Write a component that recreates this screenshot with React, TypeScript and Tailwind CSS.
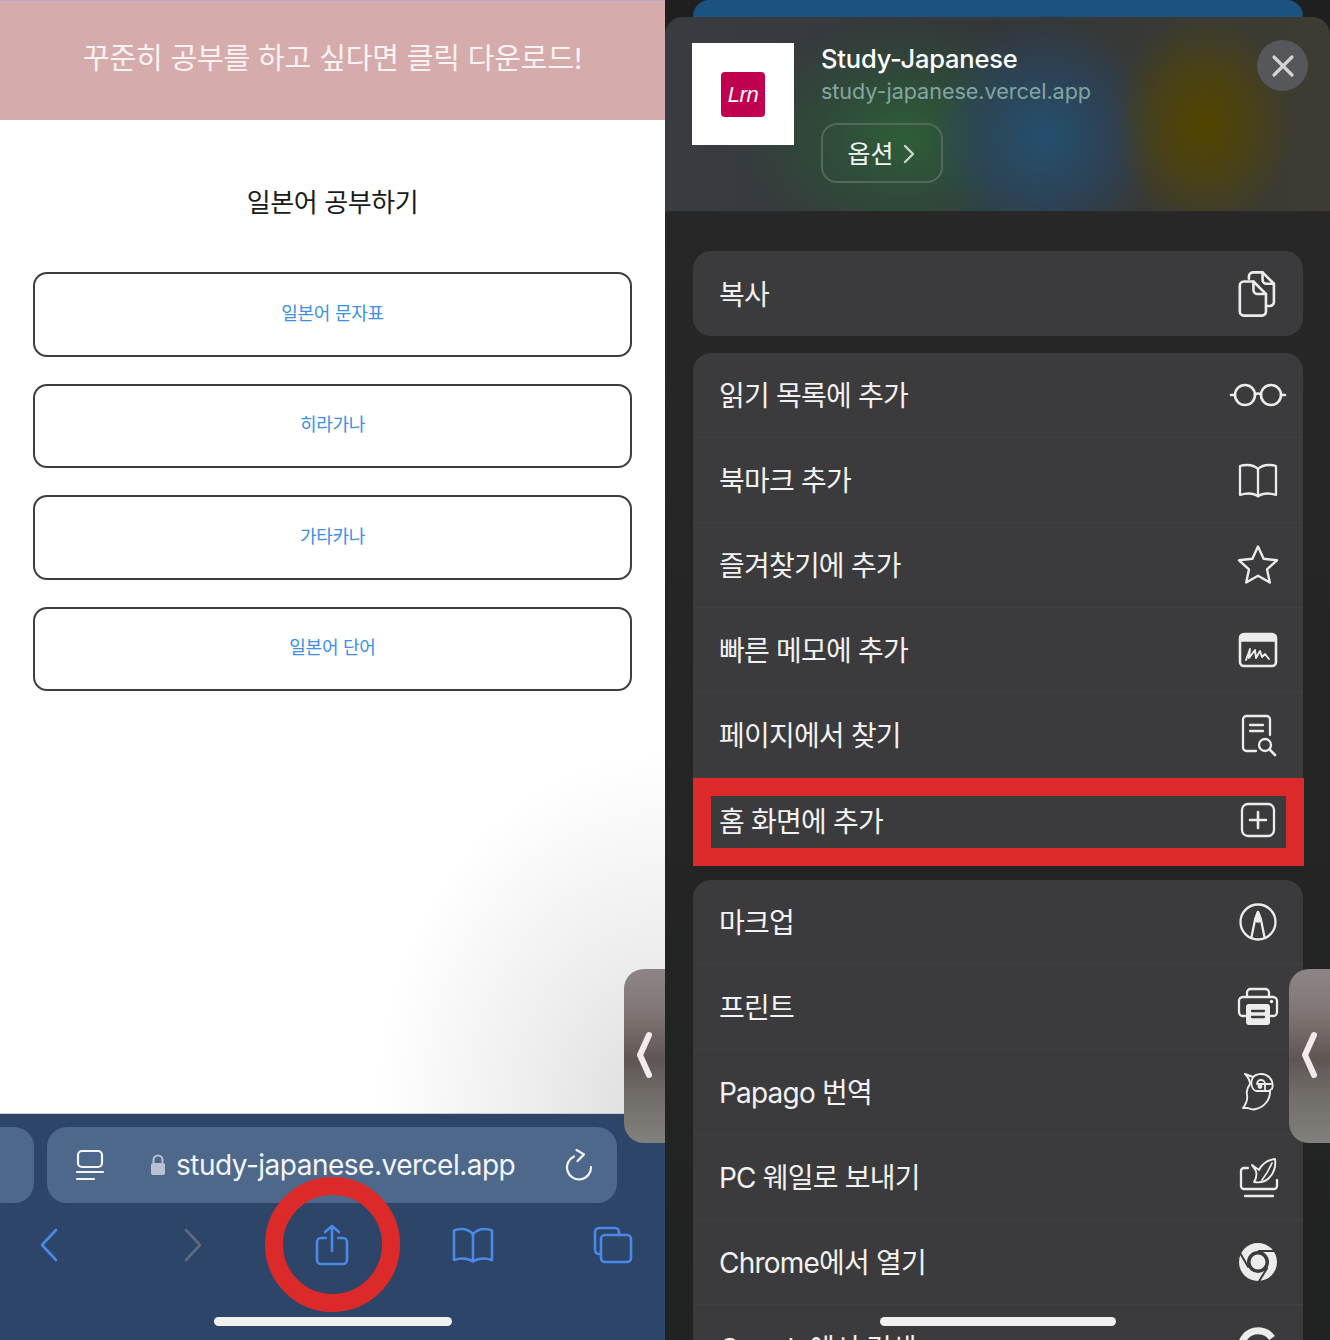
import React from "react";

const FONT = { fontFamily: '"Inter","Noto Sans CJK KR",sans-serif' };

type IconProps = { children: React.ReactNode; className?: string; box?: string };
const Ico = ({ children, className = "w-[44px] h-[44px] shrink-0", box = "0 0 44 44" }: IconProps) => (
  <svg viewBox={box} className={className} fill="none" stroke="currentColor" strokeWidth={2.300} strokeLinecap="round" strokeLinejoin="round">
    {children}
  </svg>
);

const Copy = () => (
  <Ico className="w-[50px] h-[50px] shrink-0">
    <path d="M14 8.500V6.500A3.500 3.500 0 0 1 17.500 3h8.500l10 10v16a3.500 3.500 0 0 1-3.500 3.500H29" />
    <path d="M26 3v6.500a3.500 3.500 0 0 0 3.500 3.500H36" />
    <path d="M6 14.500A3.500 3.500 0 0 1 9.500 11h8.500l11 11v15.500A3.500 3.500 0 0 1 25.500 41h-16A3.500 3.500 0 0 1 6 37.500Z" fill="#3b3b3d" />
    <path d="M18 11v7.500a3.500 3.500 0 0 0 3.500 3.500H29" />
  </Ico>
);
const Glasses = () => (
  <svg viewBox="0 0 60 28" className="w-[60px] h-[28px] shrink-0" fill="none" stroke="currentColor" strokeWidth={2.600} strokeLinecap="round">
    <circle cx="17" cy="14" r="10" />
    <circle cx="43" cy="14" r="10" />
    <path d="M27 13.500q3-2 6 0M7 14H3M53 14h4" />
  </svg>
);
const Book = () => (
  <Ico>
    <path d="M22 11c-3-3-7-4-11-4-2.500 0-5 .300-7 1v29c3-1 6-1.500 8.500-1.500 3.500 0 7 .800 9.500 3 2.500-2.200 6-3 9.500-3 2.500 0 5.500.500 8.500 1.500V8c-2-.700-4.500-1-7-1-4 0-8 1-11 4Z" />
    <path d="M22 11v27" />
  </Ico>
);
const Star = () => (
  <Ico>
    <path d="M22 3.500l5.600 12.300 13.400 1.500-10 9 2.800 13.200L22 32.800 10.200 39.500 13 26.300l-10-9 13.400-1.500Z" strokeWidth={2.400} />
  </Ico>
);
const Memo = () => (
  <Ico>
    <rect x="4" y="6" width="36" height="32" rx="4" strokeWidth={2.600} />
    <path d="M5 7.500h34v5.500H5Z" fill="currentColor" strokeWidth={1.500} />
    <path d="M10 32l4-11-1 9 6-8 1 8 4-7 2 6 3-3 4 5" strokeWidth={1.900} />
  </Ico>
);
const FindPage = () => (
  <Ico>
    <path d="M20 38H10.500A3.500 3.500 0 0 1 7 34.500V6.500A3.500 3.500 0 0 1 10.500 3h20A3.500 3.500 0 0 1 34 6.500V22" />
    <path d="M14 12h13M14 18h13" />
    <circle cx="29" cy="32" r="6" />
    <path d="M33.500 36.500L39 42" strokeWidth={2.600} />
  </Ico>
);
const PlusBox = () => (
  <Ico>
    <rect x="6" y="5" width="32" height="32" rx="6" />
    <path d="M22 13v16M14 21h16" strokeWidth={2.600} />
  </Ico>
);
const Markup = () => (
  <Ico>
    <circle cx="22" cy="22" r="17.500" />
    <path d="M15.500 37l3.500-17 3-8 3 8 3.500 17" />
    <path d="M19 20c1.500 2 4.500 2 6 0l-3-8Z" fill="currentColor" />
  </Ico>
);
const Printer = () => (
  <Ico>
    <path d="M11 12V7.500A3.500 3.500 0 0 1 14.500 4h15A3.500 3.500 0 0 1 33 7.500V12" />
    <path d="M9 31H7a4 4 0 0 1-4-4V16a4 4 0 0 1 4-4h30a4 4 0 0 1 4 4v11a4 4 0 0 1-4 4h-2" />
    <rect x="10" y="19" width="24" height="21" rx="3" fill="#ececec" stroke="none" />
    <path d="M16 26h12M16 32h12" stroke="#3b3b3d" />
    <circle cx="35.500" cy="16.500" r="1.700" fill="currentColor" stroke="none" />
  </Ico>
);
const Owl = () => (
  <Ico>
    <path d="M9 4l8 3c3-3 9-4 13-2 5 2 8 8 6 14l-2 1v2c0 8-6 15-14 17-3 1-6 0-8-1H7c3-4 5-8 4-13-1-4 1-8 3-11 0-4-2-7-5-10Z" strokeWidth={1.900} />
    <path d="M17 7c-3 5-2 12 3 14h13M21 14a4 4 0 0 1 8 0v7M21 14h14" strokeWidth={1.800} />
    <circle cx="24" cy="16.500" r="1.300" fill="currentColor" />
  </Ico>
);
const Whale = () => (
  <Ico>
    <path d="M12 13H8a3 3 0 0 0-3 3v15a3 3 0 0 0 3 3h30a3 3 0 0 0 3-3v-6" />
    <path d="M9 41h28" />
    <path d="M16 10c2 2 5 3 7 5 3-6 9-10 16-11 1 7-1 14-6 19-3 3-9 5-15 4 2-3 3-7 2-11-1-2-3-4-4-6Z" strokeWidth={1.900} />
    <path d="M26 25c4-5 7-10 10-17" strokeWidth={1.700} />
  </Ico>
);
const Chrome = () => (
  <svg viewBox="0 0 44 44" className="w-[44px] h-[44px] shrink-0">
    <circle cx="22" cy="22" r="19" fill="#ececec" />
    <circle cx="22" cy="22" r="11" fill="#3b3b3d" />
    <circle cx="22" cy="22" r="7.500" fill="#ececec" />
    <path d="M22 11h18.500M12.500 27.500L3.500 12M31.500 27.500L22 43" stroke="#3b3b3d" strokeWidth={2} />
  </svg>
);

type RowT = { t: string; i: React.ReactNode };
const Row = ({ t, i, last }: RowT & { last?: boolean }) => (
  <div className={`h-[85px] shrink-0 flex items-center justify-between pl-[26px] pr-[23px] ${last ? "" : "border-b border-[#404043]"}`}>
    <span className="pt-[2px] text-[28px] text-[#f2f2f2] tracking-[-0.8px] whitespace-nowrap">{t}</span>
    <span className="w-[44px] h-[44px] flex items-center justify-center text-[#ececec]">{i}</span>
  </div>
);

const Study = ({ label }: { label: string }) => (
  <div className="h-[84.500px] pb-[2px] rounded-[14px] border-2 border-[#3d3d3d] flex items-center justify-center text-[18px] text-[#3b8fe6] -tracking-[0.25px]">
    {label}
  </div>
);

const Handle = () => (
  <div className="absolute right-0 top-[969px] w-[41px] h-[174px] rounded-l-[20px] bg-[linear-gradient(180deg,#8d8585_0%,#7f7675_25%,#5f5654_52%,#716d69_72%,#82807c_100%)] flex items-center pl-[12px]">
    <svg viewBox="0 0 18 48" className="w-[18px] h-[48px] -mt-[2px]" fill="none" stroke="#f4e9ee" strokeWidth={6} strokeLinecap="round" strokeLinejoin="round">
      <path d="M13 4L4 24l9 20" />
    </svg>
  </div>
);

const BLUE = "#4a8ae6";

export default function App() {
  return (
    <div style={FONT} className="w-[1330px] h-[1340px] grid grid-cols-2 overflow-hidden bg-black">
      {/* Left: Safari */}
      <div className="relative h-[1340px] overflow-hidden flex flex-col bg-white">
        <div className="h-[120px] shrink-0 bg-[#d6abab] border-t border-[#b9a9c4] flex items-center justify-center text-[29px] font-normal text-[#fbf3f3] pb-[3px] -tracking-[0.15px]">
          꾸준히 공부를 하고 싶다면 클릭 다운로드!
        </div>
        <div className="flex-1 flex flex-col bg-[radial-gradient(ellipse_290px_360px_at_100%_100%,#dcdcdc_0%,#ededed_45%,#ffffff_100%)]">
          <div className="text-center text-[26px] text-[#1a1a1a] mt-[64px] leading-[38px] -tracking-[0.4px]">일본어 공부하기</div>
          <div className="mt-[50px] mx-[33px] flex flex-col gap-[27px]">
            <Study label="일본어 문자표" />
            <Study label="히라가나" />
            <Study label="가타카나" />
            <Study label="일본어 단어" />
          </div>
        </div>
        <div className="h-[227px] shrink-0 bg-[#2d4568] border-t border-[#c9ccd1] flex flex-col">
          <div className="mt-[13px] flex gap-[13px] h-[76px]">
            <div className="w-[34px] shrink-0 rounded-r-[20px] bg-[#4e688c]" />
            <div className="w-[570px] rounded-[20px] bg-[#4e688c] flex items-center pl-[28px] pr-[22px] text-[#f3f5f8]">
              <svg viewBox="0 0 30 32" className="w-[30px] h-[32px] shrink-0" fill="none" stroke="currentColor" strokeWidth={2.200} strokeLinecap="round">
                <rect x="3" y="2" width="24" height="16" rx="4" />
                <path d="M2 23h26M2 30h17" />
              </svg>
              <svg viewBox="0 0 16 24" className="w-[16px] h-[24px] shrink-0 ml-[45px]">
                <path d="M3.500 10V7a4.500 4.500 0 0 1 9 0v3" fill="none" stroke="#b7c1d2" strokeWidth={2} />
                <rect x="1" y="10" width="14" height="12" rx="2" fill="#b7c1d2" />
              </svg>
              <span className="ml-[10px] text-[28px] text-[#f3f5f8] -tracking-[0.5px] whitespace-nowrap">study-japanese.vercel.app</span>
              <svg viewBox="0 0 30 32" className="w-[30px] h-[32px] ml-auto shrink-0" fill="none" stroke="currentColor" strokeWidth={2.200} strokeLinecap="round" strokeLinejoin="round">
                <path d="M9 7.500A12 12 0 1 0 26 18" />
                <path d="M12 1l7 5-7 6" transform="rotate(-5 12 6)" />
              </svg>
            </div>
          </div>
          <div className="mt-[14px] flex items-center h-[56px] relative text-[#4a8ae6]">
            <svg viewBox="0 0 20 36" className="ml-[39px] w-[20px] h-[36px]" fill="none" stroke={BLUE} strokeWidth={2.600} strokeLinecap="round" strokeLinejoin="round">
              <path d="M17 3L3 18l14 15" />
            </svg>
            <svg viewBox="0 0 20 36" className="ml-[124px] w-[20px] h-[36px]" fill="none" stroke="#5d6a7e" strokeWidth={2.600} strokeLinecap="round" strokeLinejoin="round">
              <path d="M3 3l14 15L3 33" />
            </svg>
            <svg viewBox="0 0 34 42" className="ml-[112px] w-[34px] h-[42px]" fill="none" stroke={BLUE} strokeWidth={2.600} strokeLinecap="round" strokeLinejoin="round">
              <path d="M11 14H6a4 4 0 0 0-4 4v18a4 4 0 0 0 4 4h22a4 4 0 0 0 4-4V18a4 4 0 0 0-4-4h-5" />
              <path d="M17 27V2M10 8l7-6 7 6" />
            </svg>
            <svg viewBox="0 0 44 38" className="ml-[102px] w-[44px] h-[38px]" fill="none" stroke={BLUE} strokeWidth={2.600} strokeLinecap="round" strokeLinejoin="round">
              <path d="M22 8c-3-3-7-5-11-5-3 0-6 .500-8 1.500V34c3-1 6-1.500 8.500-1.500 3.500 0 7.500 1 10.500 3 3-2 7-3 10.500-3 2.500 0 5.500.500 8.500 1.500V4.500C39 3.500 36 3 33 3c-4 0-8 2-11 5Z" />
              <path d="M22 8v27" />
            </svg>
            <svg viewBox="0 0 40 38" className="ml-[98px] w-[40px] h-[38px]" fill="none" stroke={BLUE} strokeWidth={2.600} strokeLinejoin="round">
              <path d="M8 28H6a4 4 0 0 1-4-4V6a4 4 0 0 1 4-4h16a4 4 0 0 1 4 4v3" />
              <rect x="8" y="9" width="30" height="27" rx="4" />
            </svg>
          </div>
          <div className="mt-[44px] mx-auto w-[238px] h-[9px] rounded-full bg-[#f1f1f1]" />
        </div>
        <div className="absolute left-[265px] top-[1177px] w-[135px] h-[135px] rounded-full border-[18px] border-[#dc2a2a]" />
        <Handle />
      </div>

      {/* Right: share sheet */}
      <div className="relative h-[1340px] overflow-hidden bg-[#1f1f1f]">
        <div className="absolute left-[28px] top-0 w-[610px] h-[30px] rounded-t-[16px] bg-[#1b5280]" />
        <div className="absolute left-0 right-0 top-[17px] bottom-0 rounded-t-[18px] overflow-hidden bg-[#272727] flex flex-col">
          <div className="h-[195px] shrink-0 relative flex pl-[27px] pt-[26px] border-b border-[#2a2a2a] bg-[radial-gradient(ellipse_90px_110px_at_81%_55%,#544400_0%,#4f440bcc_45%,transparent_100%),radial-gradient(ellipse_115px_120px_at_57%_62%,#24506e_0%,#2a4560bb_55%,transparent_100%),radial-gradient(ellipse_165px_120px_at_36%_62%,#2e5e38_0%,#2d5038bb_50%,transparent_100%),linear-gradient(90deg,#393c40_0%,#33373a_50%,#3e3c32_100%)]">
            <div className="w-[102px] h-[102px] bg-white flex items-center justify-center shrink-0">
              <div className="w-[44px] h-[45px] rounded-[4px] bg-[#c1004f] flex items-center justify-center text-white text-[22px] italic -tracking-[0.5px]" style={{ fontFamily: '"Liberation Sans",sans-serif' }}>
                Lrn
              </div>
            </div>
            <div className="ml-[27px] flex flex-col items-start">
              <div className="text-[25.500px] leading-[32px] font-medium text-white -tracking-[0.2px]">Study-Japanese</div>
              <div className="text-[21.600px] leading-[32px] text-[#82a5a0] -tracking-[0.05px]">study-japanese.vercel.app</div>
              <div className="mt-[16px] w-[122px] h-[60px] rounded-[16px] border-2 border-[#55685a] flex items-center justify-center gap-[9px] text-[#f3f3f3] text-[25px]">
                <span className="pt-[3px] -ml-[2px]">옵션</span>
                <svg viewBox="0 0 12 20" className="w-[12px] h-[20px] mt-[2px]" fill="none" stroke="#cfd3cf" strokeWidth={2.400} strokeLinecap="round" strokeLinejoin="round">
                  <path d="M2 2l8 8-8 8" />
                </svg>
              </div>
            </div>
            <div className="absolute right-[22px] top-[23px] w-[51px] h-[51px] rounded-full bg-[#55575a] flex items-center justify-center">
              <svg viewBox="0 0 24 24" className="w-[24px] h-[24px]" fill="none" stroke="#d4d4d4" strokeWidth={3.200} strokeLinecap="round">
                <path d="M3 3l18 18M21 3L3 21" />
              </svg>
            </div>
          </div>
          <div className="flex-1 pl-[28px] pr-[27px] pt-[39px] flex flex-col bg-[linear-gradient(180deg,#272727_0%,#212222_100%)]">
            <div className="rounded-[18px] bg-[#3b3b3d] shrink-0">
              <Row t="복사" i={<Copy />} last />
            </div>
            <div className="mt-[17px] rounded-[18px] bg-[#3b3b3d] overflow-hidden shrink-0">
              <Row t="읽기 목록에 추가" i={<Glasses />} />
              <Row t="북마크 추가" i={<Book />} />
              <Row t="즐겨찾기에 추가" i={<Star />} />
              <Row t="빠른 메모에 추가" i={<Memo />} />
              <Row t="페이지에서 찾기" i={<FindPage />} />
              <Row t="홈 화면에 추가" i={<PlusBox />} last />
            </div>
            <div className="mt-[17px] rounded-t-[18px] bg-[#3b3b3d] flex-1 overflow-hidden">
              <Row t="마크업" i={<Markup />} />
              <Row t="프린트" i={<Printer />} />
              <Row t="Papago 번역" i={<Owl />} />
              <Row t="PC 웨일로 보내기" i={<Whale />} />
              <Row t="Chrome에서 열기" i={<Chrome />} />
              <Row t="Google에서 검색" i={<svg viewBox="0 0 44 44" className="w-[44px] h-[44px] shrink-0" fill="none" stroke="#ececec" strokeWidth={7}><path d="M36 12A17 17 0 1 0 39 24H23" /></svg>} last />
            </div>
          </div>
        </div>
        <div className="absolute left-[28px] top-[778px] w-[611px] h-[88px] border-[18px] border-[#dc2a2a]" />
        <div className="absolute left-[215px] top-[1317px] w-[236px] h-[9px] rounded-full bg-[#f1f1f1]" />
        <Handle />
      </div>
    </div>
  );
}
